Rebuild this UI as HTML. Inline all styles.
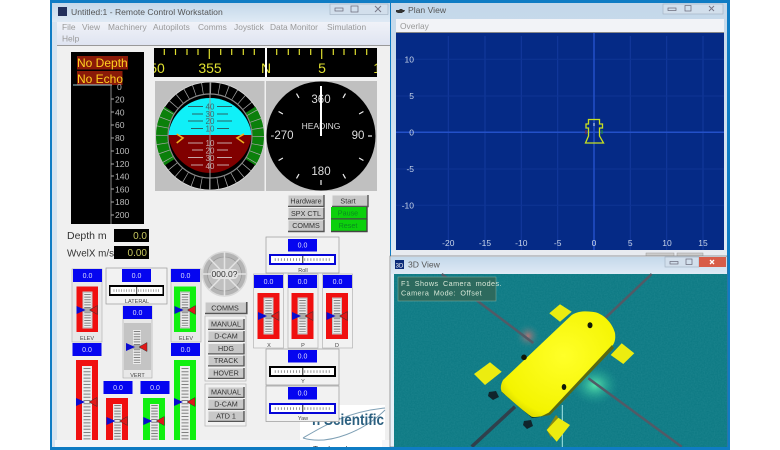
<!DOCTYPE html>
<html><head><meta charset="utf-8"><style>
html,body{margin:0;padding:0;background:#fff;width:780px;height:450px;overflow:hidden}
svg{display:block;filter:blur(.35px)}
svg svg{filter:none}
text{font-family:"Liberation Sans",sans-serif}
</style></head><body>
<svg xmlns="http://www.w3.org/2000/svg" width="780" height="450" viewBox="0 0 780 450">
<defs>
<clipPath id="tapeclip"><rect x="154" y="48" width="223" height="29"/></clipPath>
<linearGradient id="tb" x1="0" y1="0" x2="0" y2="1"><stop offset="0" stop-color="#c4d8ea"/><stop offset="1" stop-color="#dfeaf5"/></linearGradient>
<linearGradient id="mn" x1="0" y1="0" x2="0" y2="1"><stop offset="0" stop-color="#f0f2f8"/><stop offset="1" stop-color="#dfe4f1"/></linearGradient>
<radialGradient id="gg"><stop offset="0" stop-color="#5ff0b0" stop-opacity=".9"/><stop offset="1" stop-color="#1a9a90" stop-opacity="0"/></radialGradient>
<radialGradient id="rg"><stop offset="0" stop-color="#e07070" stop-opacity=".75"/><stop offset="1" stop-color="#1a8a90" stop-opacity="0"/></radialGradient>
<radialGradient id="hull" cx=".55" cy=".42" r=".72"><stop offset="0" stop-color="#ffff28"/><stop offset=".78" stop-color="#f4f400"/><stop offset="1" stop-color="#c4c400"/></radialGradient>
<filter id="noise" x="0" y="0" width="100%" height="100%"><feTurbulence type="fractalNoise" baseFrequency=".7" numOctaves="2" seed="4"/><feColorMatrix values="0 0 0 0 .2  0 0 0 0 .6  0 0 0 0 .65  0 0 0 .55 -.12"/></filter>
<g id="btn"><rect width="36" height="11" fill="#c8c8c8"/><path d="M0 11V0H36" fill="none" stroke="#eee" stroke-width="1"/><path d="M36 0V11.500H0" fill="none" stroke="#555" stroke-width="1.400"/></g>
<g id="btng"><rect width="36" height="11.500" fill="#0cd00c"/><path d="M36 0V12H0" fill="none" stroke="#444" stroke-width="1.400"/></g>
<g id="tri"><path d="M0 -4L9 0L0 4Z" fill="#0a0ad0"/><path d="M21 -4.500V4.500L13 0Z" fill="#e01818" stroke="#333" stroke-width=".5"/></g>
<g id="hs"><rect width="66" height="10" fill="#fff"/><line x1="4" x2="32" y1="5" y2="5" stroke="#777" stroke-width="3" stroke-dasharray=".8 2.400"/><line x1="35" x2="63" y1="5" y2="5" stroke="#777" stroke-width="3" stroke-dasharray=".8 2.400"/><line x1="33.300" x2="33.300" y1="0" y2="10" stroke="#111" stroke-width="1"/></g>
<g id="lad46"><rect x="-5" y="-1.500" width="10" height="37" fill="#c4c4c4"/><rect x="-4" y="0" width="8" height="34" fill="#ececec"/><line x1="0" x2="0" y1="1" y2="33" stroke="#808080" stroke-width="6.500" stroke-dasharray="1 1.600"/><rect x="-4.500" y="15" width="9" height="4" fill="#aaa"/></g>
</defs>

<!-- outer frame -->
<rect x="50" y="0" width="680" height="450" fill="#0f7cc4"/>
<!-- left window -->
<rect x="52" y="3" width="338" height="444" fill="#d6e3f0"/>
<rect x="52" y="3" width="338" height="19" fill="url(#tb)"/>
<rect x="58" y="7" width="9" height="9" fill="#23305c"/>
<text x="71" y="15" fill="#555" style="font-size:8.600px">Untitled:1 - Remote Control Workstation</text>
<rect x="330" y="4" width="58" height="10.500" fill="#d2dfec" stroke="#9fb0c0" stroke-width=".6"/>
<rect x="335" y="8" width="8" height="3" fill="none" stroke="#667" stroke-width=".7"/>
<rect x="351" y="6" width="7" height="6" fill="none" stroke="#667" stroke-width=".7"/>
<path d="M375 6l6 6m0-6l-6 6" stroke="#778" stroke-width="1"/>
<rect x="57" y="22" width="333" height="23" fill="url(#mn)"/>
<g font-size="8.400" fill="#9a9a9a">
<text x="62" y="30">File</text><text x="82" y="30">View</text><text x="108" y="30">Machinery</text><text x="153" y="30">Autopilots</text><text x="198" y="30">Comms</text><text x="234" y="30">Joystick</text><text x="270" y="30">Data Monitor</text><text x="327" y="30">Simulation</text><text x="62" y="41.500">Help</text>
</g>
<rect x="57" y="45" width="333" height="395" fill="#f0f0f0"/>
<rect x="57" y="45" width="333" height="1" fill="#999"/>
<rect x="55" y="440" width="335" height="7" fill="#f4f6f9"/>

<!-- depth -->
<rect x="71" y="52" width="73" height="172" fill="#000"/>
<rect x="77" y="56" width="51" height="13.500" fill="#8a1a08"/>
<rect x="77" y="71" width="45.500" height="14" fill="#8a1a08"/>
<g font-size="12" fill="#ffd020"><text x="77" y="67">No Depth</text><text x="77" y="83">No Echo</text></g>
<line x1="73" y1="85" x2="112" y2="85" stroke="#9fd0d8"/>
<line x1="111" y1="85" x2="111" y2="224" stroke="#888"/>
<path d="M111 99h3M111 112h3M111 125h3M111 138h3M111 151h3M111 164h3M111 176h3M111 189h3M111 202h3M111 215h3" fill="none" stroke="#aaa"/>
<g font-size="8.600" fill="#bbb"><text x="117" y="90">0</text><text x="115" y="102.500">20</text><text x="115" y="115.500">40</text><text x="115" y="128">60</text><text x="115" y="141">80</text><text x="115" y="154">100</text><text x="115" y="167">120</text><text x="115" y="179.500">140</text><text x="115" y="192.500">160</text><text x="115" y="205">180</text><text x="115" y="218">200</text></g>

<!-- tape -->
<rect x="154" y="48" width="223" height="29" fill="#000"/>
<path stroke="#e0e030" stroke-width="1.200" fill="none" d="M164.300 49v6M175.500 49v6M187 49v6M198 49v6M209.300 49v10M220.700 49v6M231.700 49v6M243.300 49v6M254.300 49v6M276.700 49v6M288.300 49v6M299.300 49v6M310.700 49v6M321.700 49v10M333.300 49v6M344 49v6M355.300 49v6M366.700 49v6"/>
<g clip-path="url(#tapeclip)" font-size="14" fill="#e0e030" text-anchor="middle"><text x="157" y="73">50</text><text x="210" y="73">355</text><text x="266" y="73">N</text><text x="322" y="73">5</text><text x="381" y="73">10</text></g>
<rect x="265" y="48" width="2" height="29" fill="#fff"/>

<!-- ADI -->
<rect x="155" y="81" width="109.500" height="110" fill="#c0c0c0"/>
<circle cx="210" cy="136" r="54" fill="#000" stroke="#ddd" stroke-width=".8"/>
<path d="M250.300 109.900A48 48 0 0 1 250.300 162.100M169.700 162.100A48 48 0 0 1 169.700 109.900" fill="none" stroke="#0b800b" stroke-width="12"/>
<circle cx="210" cy="136" r="48" fill="none" stroke="#a8a8a8" stroke-width="12" stroke-dasharray=".7 7.680"/>
<path d="M168.300 135A42 42 0 0 1 251.700 135Z" fill="#10f0f8"/>
<path d="M168.300 135H251.700A42 43 0 0 1 168.300 135Z" fill="#800000"/>
<circle cx="210" cy="136" r="42" fill="none" stroke="#888" stroke-width="1.200"/>
<line x1="210" y1="82" x2="210" y2="190" stroke="#999" stroke-width="1"/>
<path stroke="#333" stroke-width=".8" fill="none" d="M188 106.500h15M217 106.500h15M192 114h11M217 114h11M188 121h15M217 121h15M191 128.500h12M217 128.500h12"/>
<path stroke="#ddd" stroke-width=".8" fill="none" d="M188 143h15M217 143h15M192 150h11M217 150h11M188 157.500h15M217 157.500h15M191 165h12M217 165h12"/>
<g font-size="8" text-anchor="middle"><g fill="#3a6a70"><text x="210" y="109.500">40</text><text x="210" y="117">30</text><text x="210" y="124">20</text><text x="210" y="131.500">10</text></g><g fill="#c8a8a8"><text x="210" y="146">10</text><text x="210" y="153.500">20</text><text x="210" y="161">30</text><text x="210" y="169">40</text></g></g>
<path d="M176.700 134L183 138L176.700 143M244 134L237 138L244 143" fill="none" stroke="#f0b020" stroke-width="1.600"/>

<!-- Heading -->
<rect x="266" y="81" width="111" height="110" fill="#c0c0c0"/>
<circle cx="321" cy="136" r="54.500" fill="#000"/>
<g stroke="#eee" stroke-width="1.200">
<line x1="321" y1="87" x2="321" y2="92" transform="rotate(30 321 136)"/><line x1="321" y1="87" x2="321" y2="92" transform="rotate(60 321 136)"/><line x1="321" y1="87" x2="321" y2="92" transform="rotate(120 321 136)"/><line x1="321" y1="87" x2="321" y2="92" transform="rotate(150 321 136)"/><line x1="321" y1="87" x2="321" y2="92" transform="rotate(180 321 136)"/><line x1="321" y1="87" x2="321" y2="92" transform="rotate(210 321 136)"/><line x1="321" y1="87" x2="321" y2="92" transform="rotate(240 321 136)"/><line x1="321" y1="87" x2="321" y2="92" transform="rotate(300 321 136)"/><line x1="321" y1="87" x2="321" y2="92" transform="rotate(330 321 136)"/><line x1="368" y1="136" x2="372" y2="136"/>
</g>
<g fill="#ddd" text-anchor="middle"><text x="321" y="103" font-size="11.500">360</text><text x="321" y="129" font-size="8.500">HEADING</text><text x="282" y="139" font-size="11.500">-270</text><text x="358" y="139" font-size="11.500">90</text><text x="321" y="175" font-size="11.500">180</text></g>
<rect x="320" y="86" width="2" height="50" fill="#fff"/>

<!-- Buttons top -->
<g font-size="7.200" fill="#333" text-anchor="middle">
<use href="#btn" x="288" y="195"/><text x="306" y="203.500">Hardware</text>
<use href="#btn" x="288" y="207.500"/><text x="306" y="216">SPX CTL</text>
<use href="#btn" x="288" y="220"/><text x="306" y="228">COMMS</text>
<use href="#btn" x="332" y="195"/><text x="348" y="203.500">Start</text>
<use href="#btng" x="331" y="207"/><text x="348" y="215.500" fill="#0a8a20">Pause</text>
<use href="#btng" x="331" y="219.500"/><text x="348" y="228" fill="#0a8a20">Reset</text>
</g>

<!-- depth readouts -->
<g font-size="10.500" fill="#333"><text x="67" y="239">Depth m</text><text x="67" y="256.500" textLength="47" lengthAdjust="spacingAndGlyphs">WvelX m/s</text></g>
<rect x="114" y="229" width="35" height="13" fill="#000"/><rect x="114" y="246" width="35" height="13" fill="#000"/>
<g font-size="10" fill="#c8c860" text-anchor="end"><text x="147" y="239">0.0</text><text x="147" y="256">0.00</text></g>

<!-- left ELEV -->
<rect x="72" y="269" width="30" height="73" fill="#e8e8e8" stroke="#aaa" stroke-width=".6"/>
<rect x="76.500" y="286.500" width="21.500" height="45.500" fill="#f01010"/>
<g transform="translate(87.500 293)"><use href="#lad46"/></g><use href="#tri" x="76.500" y="310"/>
<rect x="171" y="269" width="30" height="73" fill="#e8e8e8" stroke="#aaa" stroke-width=".6"/>
<rect x="174" y="286.500" width="22" height="45.500" fill="#10f010"/>
<g transform="translate(185 293)"><use href="#lad46"/></g><use href="#tri" x="174.500" y="310"/>
<!-- lateral -->
<rect x="106" y="268" width="61" height="36" fill="#f2f2f2" stroke="#999" stroke-width=".7"/>
<rect x="109" y="285" width="55" height="11" fill="#000"/>
<svg x="110.500" y="287" width="52" height="7" viewBox="0 1 66 8" preserveAspectRatio="none"><use href="#hs"/></svg>
<!-- vert -->
<rect x="123" y="306" width="29" height="72" fill="#e8e8e8" stroke="#aaa" stroke-width=".6"/>
<rect x="124" y="323" width="27" height="47" fill="#c4c4c4"/>
<g transform="translate(137 330)"><use href="#lad46"/></g><use href="#tri" x="126" y="347"/>
<!-- big -->
<rect x="72" y="343" width="29" height="97" fill="#f0f0f0"/><rect x="171" y="343" width="29" height="97" fill="#f0f0f0"/>
<rect x="76" y="360" width="22" height="80" fill="#f01010"/><rect x="174" y="360" width="22" height="80" fill="#10f010"/>
<g fill="#ececec"><rect x="82" y="366" width="10" height="74"/><rect x="180" y="366" width="10" height="74"/></g>
<g stroke="#808080" stroke-width="7" stroke-dasharray="1 2.200"><line x1="87" x2="87" y1="368" y2="440"/><line x1="185" x2="185" y1="368" y2="440"/></g>
<use href="#tri" x="76" y="402"/><use href="#tri" x="174" y="402"/>
<!-- small -->
<rect x="103" y="381" width="29" height="59" fill="#f0f0f0"/><rect x="140" y="381" width="29" height="59" fill="#f0f0f0"/>
<rect x="106" y="398" width="22" height="42" fill="#f01010"/><rect x="143" y="398" width="22" height="42" fill="#10f010"/>
<g fill="#e8e8e8"><rect x="113" y="404" width="9" height="36"/><rect x="150" y="404" width="9" height="36"/></g>
<g stroke="#808080" stroke-width="6.500" stroke-dasharray="1 1.800"><line x1="117.500" x2="117.500" y1="405" y2="440"/><line x1="154.500" x2="154.500" y1="405" y2="440"/></g>
<use href="#tri" x="106.500" y="421"/><use href="#tri" x="143.300" y="421"/>

<!-- blue boxes -->
<g fill="#0505f0">
<rect x="73" y="269" width="29" height="13"/><rect x="122" y="269" width="29" height="13"/><rect x="171" y="269" width="29" height="13"/>
<rect x="123" y="306" width="29" height="13"/><rect x="72.500" y="343" width="29" height="13"/><rect x="171" y="343" width="29" height="13"/>
<rect x="103.500" y="381" width="29" height="13"/><rect x="140.500" y="381" width="29" height="13"/>
</g>

<!-- knob -->
<circle cx="224.500" cy="274" r="22" fill="#b4b4b4" stroke="#d8d8d8" stroke-width="1.500"/>
<circle cx="224.500" cy="274" r="17" fill="#c0c0c0" stroke="#999" stroke-width=".8"/>
<path d="M224.500 252v44M203 274h43M209 258l31 32M240 258l-31 32" stroke="#e4e4e4" stroke-width="1.500"/>
<rect x="211" y="269" width="27" height="10" rx="4" fill="#e4e4e4"/>
<text x="224.500" y="277" font-size="8.500" fill="#333" text-anchor="middle">000.0?</text>

<!-- button groups -->
<rect x="205" y="316" width="41" height="65" fill="#f2f2f2" stroke="#bbb" stroke-width=".8"/>
<rect x="205" y="384" width="41" height="42" fill="#f2f2f2" stroke="#bbb" stroke-width=".8"/>
<use href="#btn" transform="translate(205 302) scale(1.160 1)"/>
<g transform="translate(208 319)"><use href="#btn" transform="scale(1 .9)"/></g>
<g transform="translate(208 331)"><use href="#btn" transform="scale(1 .9)"/></g>
<g transform="translate(208 343.500)"><use href="#btn" transform="scale(1 .9)"/></g>
<g transform="translate(208 355.500)"><use href="#btn" transform="scale(1 .9)"/></g>
<g transform="translate(208 368)"><use href="#btn" transform="scale(1 .9)"/></g>
<g transform="translate(208 387)"><use href="#btn" transform="scale(1 .9)"/></g>
<g transform="translate(208 399)"><use href="#btn" transform="scale(1 .9)"/></g>
<g transform="translate(208 411)"><use href="#btn" transform="scale(1 .9)"/></g>
<g font-size="7.200" fill="#333" text-anchor="middle"><text x="225" y="310.500">COMMS</text><text x="226" y="326.500">MANUAL</text><text x="226" y="338.500">D-CAM</text><text x="226" y="351">HDG</text><text x="226" y="363">TRACK</text><text x="226" y="375.500">HOVER</text><text x="226" y="394.500">MANUAL</text><text x="226" y="406.500">D-CAM</text><text x="226" y="418.500">ATD 1</text></g>

<!-- logo -->
<rect x="300" y="405" width="85" height="35" fill="#fff"/>
<rect x="310" y="440" width="72" height="7" fill="#fff"/>
<path d="M303 438C320 428 345 412 385 408M303 438C330 446 365 430 385 410" fill="none" stroke="#7fa0b5" stroke-width="1"/>
<text x="312" y="425" font-size="16" font-weight="bold" fill="#2c6080" textLength="72" lengthAdjust="spacingAndGlyphs">n Scientific</text>
<text x="313" y="452" font-size="8" fill="#444">Top Level</text>
<rect x="390" y="405" width="2" height="45" fill="#d6e3f0"/>

<!-- Roll / XPD / Y / Yaw panels -->
<rect x="266" y="237" width="73" height="36" fill="#f2f2f2" stroke="#999" stroke-width=".7"/>
<rect x="288" y="239" width="29" height="12.500" fill="#0505f0"/>
<rect x="269" y="254" width="67" height="11" fill="#0505d8"/>
<svg x="271" y="256" width="63" height="7" viewBox="0 1 66 8" preserveAspectRatio="none"><use href="#hs"/></svg>
<rect x="266" y="349" width="73" height="36" fill="#f2f2f2" stroke="#999" stroke-width=".7"/>
<rect x="288" y="350" width="29" height="12.500" fill="#0505f0"/>
<rect x="269" y="366" width="67" height="11" fill="#000"/>
<svg x="271" y="368" width="63" height="7" viewBox="0 1 66 8" preserveAspectRatio="none"><use href="#hs"/></svg>
<rect x="266" y="386" width="73" height="35.500" fill="#f2f2f2" stroke="#999" stroke-width=".7"/>
<rect x="288" y="387" width="29" height="12.500" fill="#0505f0"/>
<rect x="269" y="403" width="67" height="11" fill="#0505d8"/>
<svg x="271" y="405" width="63" height="7" viewBox="0 1 66 8" preserveAspectRatio="none"><use href="#hs"/></svg>
<rect x="253.500" y="274" width="30" height="74" fill="#f2f2f2" stroke="#aaa" stroke-width=".6"/><rect x="288" y="274" width="30" height="74" fill="#f2f2f2" stroke="#aaa" stroke-width=".6"/><rect x="322.500" y="274" width="30" height="74" fill="#f2f2f2" stroke="#aaa" stroke-width=".6"/>
<rect x="254" y="275" width="29" height="13" fill="#0505f0"/><rect x="288" y="275" width="29" height="13" fill="#0505f0"/><rect x="323" y="275" width="29" height="13" fill="#0505f0"/>
<rect x="257.500" y="293" width="22" height="46" fill="#f01010"/><rect x="291.500" y="293" width="22" height="46" fill="#f01010"/><rect x="326" y="293" width="22" height="46" fill="#f01010"/>
<g transform="translate(268.500 299)"><use href="#lad46"/></g><g transform="translate(302.500 299)"><use href="#lad46"/></g><g transform="translate(337 299)"><use href="#lad46"/></g>
<use href="#tri" x="258" y="316"/><use href="#tri" x="292" y="316"/><use href="#tri" x="326.500" y="316"/>

<g fill="#fff" text-anchor="middle" style="font-size:7px" opacity=".85">
<text x="87.500" y="278">0.0</text><text x="136.500" y="278">0.0</text><text x="185.500" y="278">0.0</text><text x="137.500" y="315">0.0</text><text x="87" y="352">0.0</text><text x="185.500" y="352">0.0</text><text x="118" y="390">0.0</text><text x="155" y="390">0.0</text>
<text x="302.500" y="247.500">0.0</text><text x="268.500" y="284">0.0</text><text x="302.500" y="284">0.0</text><text x="337.500" y="284">0.0</text><text x="302.500" y="358.500">0.0</text><text x="302.500" y="395.500">0.0</text>
</g>
<g fill="#444" text-anchor="middle" style="font-size:5.500px">
<text x="87" y="340">ELEV</text><text x="186" y="340">ELEV</text><text x="137" y="303">LATERAL</text><text x="137.500" y="377">VERT</text><text x="303" y="272">Roll</text><text x="269" y="347">X</text><text x="303" y="347">P</text><text x="337" y="347">D</text><text x="303" y="383">Y</text><text x="303" y="420">Yaw</text>
</g>

<!-- Plan view window -->
<rect x="391" y="3" width="336" height="254" fill="url(#tb)"/>
<rect x="396" y="19" width="328" height="14" fill="#f2f3f7"/>
<rect x="396" y="32" width="328" height="1" fill="#888"/>
<text x="400" y="29" font-size="8.400" fill="#999">Overlay</text>
<path d="M396 10h3l1-1h2l1 1h2l-1 2h-1l-1 1h-4l-2-1z" fill="#333"/>
<text x="408" y="13" font-size="8.600" fill="#555">Plan View</text>
<rect x="663" y="4" width="60" height="10" fill="#d2dfec" stroke="#9fb0c0" stroke-width=".6"/>
<rect x="668" y="8" width="8" height="2.500" fill="none" stroke="#667" stroke-width=".7"/>
<rect x="685" y="5.500" width="6" height="5.500" fill="none" stroke="#667" stroke-width=".7"/>
<path d="M709 6l5 5m0-5l-5 5" stroke="#778" stroke-width="1"/>
<rect x="396" y="33" width="328" height="217" fill="#052a86"/>
<path stroke="#143a9e" stroke-width="1" fill="none" d="M448.300 36V250M485 36V250M521.300 36V250M557.700 36V250M630.300 36V250M666.700 36V250M703 36V250"/>
<path stroke="#0e3494" stroke-width="1" fill="none" d="M396 59.300H724M396 96H724M396 169H724M396 205.300H724"/>
<path stroke="#2350c8" stroke-width="1.500" fill="none" d="M594 33V250M396 132.300H724"/>
<g font-size="8.500" fill="#c8d4e8" text-anchor="middle"><text x="448.300" y="246">-20</text><text x="485" y="246">-15</text><text x="521.300" y="246">-10</text><text x="557.700" y="246">-5</text><text x="594" y="246">0</text><text x="630.300" y="246">5</text><text x="667" y="246">10</text><text x="703" y="246">15</text></g>
<g font-size="8.500" fill="#c8d4e8" text-anchor="end"><text x="414" y="62.500">10</text><text x="414" y="99">5</text><text x="414" y="135.500">0</text><text x="414" y="172">-5</text><text x="414" y="208.500">-10</text></g>
<path d="M588.500 119.500H599.500V124H602.500V128H599.500V136L603.500 143H585.500L588.500 136V128H586V124H588.500Z" fill="none" stroke="#c8e020" stroke-width="1.300"/>
<path d="M586 130v4" stroke="#a02020"/><path d="M602 130v4" stroke="#20a020"/>
<path d="M594 123v3" stroke="#fff" stroke-width=".8"/>
<rect x="391" y="250" width="336" height="7" fill="#e8ebf0"/>
<rect x="646" y="253" width="28" height="4" fill="#ccc" stroke="#999" stroke-width=".5"/><rect x="677" y="253" width="26" height="4" fill="#ccc" stroke="#999" stroke-width=".5"/>

<!-- 3D window -->
<rect x="390" y="256" width="337" height="191" fill="#e8f0f8" stroke="#666" stroke-width=".6"/>
<rect x="391" y="257" width="336" height="17" fill="url(#tb)"/>
<rect x="395" y="260" width="9" height="9" fill="#0a2a78"/>
<text x="399.500" y="267.500" font-size="6" fill="#fff" text-anchor="middle">3D</text>
<text x="408" y="267.500" font-size="8.600" fill="#555">3D View</text>
<rect x="665" y="257" width="34" height="10" fill="#d2dfec" stroke="#9fb0c0" stroke-width=".6"/>
<rect x="670" y="261.500" width="8" height="2.500" fill="none" stroke="#667" stroke-width=".7"/>
<rect x="686" y="259" width="6" height="5.500" fill="none" stroke="#667" stroke-width=".7"/>
<rect x="699" y="257" width="27" height="10" fill="#d85c48"/>
<path d="M710 260l4 4m0-4l-4 4" stroke="#fff" stroke-width="1.300"/>
<rect x="394" y="274" width="333" height="173" fill="#0e7a84"/>
<rect x="394" y="274" width="333" height="173" filter="url(#noise)" opacity=".3"/>
<circle cx="528" cy="336" r="13" fill="url(#rg)"/>
<ellipse cx="595" cy="385" rx="24" ry="20" fill="url(#gg)"/>
<path stroke="#525a66" stroke-width="2.500" fill="none" d="M441.700 274L533.300 343M651.700 274L605 318.300M588.300 378.300L681.700 446.700"/>
<path d="M515 406.700L471.700 446.700" stroke-width="3.500" stroke="#30404c" fill="none"/>
<line x1="562.300" y1="405" x2="562.300" y2="447" stroke="#a8e8e8" stroke-width="1"/>
<path d="M560 304.300L571.700 311.700L560 321.700L549.300 313.300Z" fill="#ecec10"/>
<path d="M621.700 343.300L634.300 353.300L623.300 364L610.700 355Z" fill="#ecec10"/>
<path d="M490 362.300L501.700 371.700L485 385L474 374Z" fill="#ecec10"/>
<path d="M556 415L546.700 430L551 438L558 417Z" fill="#8a8a10"/>
<path d="M558.300 417.700L570 425L556.700 441.700L546.700 430Z" fill="#ecec10"/>
<path d="M489 392l7-1 3 6-6 3-5-4zM524 421l7-1 2 6-6 3-4-4z" fill="#10242c"/>
<path d="M501.700 392L532 418L540 417L504 388Z" fill="#0a3a20"/>
<path d="M591.700 311.700C603 312 613 324 615 333C616 340 614 344 611.700 346.700L548.300 413.300C542 417 536 417.500 531.700 416.700C522 410 510 399 501.700 391.700C500 388 501 384 503 380L571.700 315C578 311 585 311 591.700 311.700Z" fill="url(#hull)"/>
<path d="M614 348L550 415L540 417L549 412.500L612 345Z" fill="#5a6a10"/>
<g fill="#101808"><ellipse cx="590" cy="325.300" rx="2.500" ry="3"/><ellipse cx="524" cy="357.300" rx="2.800" ry="2.800"/><ellipse cx="564" cy="387" rx="2.300" ry="3"/></g>
<rect x="398" y="277" width="98" height="24" fill="#2d6a5e" stroke="#8ab0a0" stroke-width=".5"/>
<g fill="#d8e8d8" style="font-size:7.200px"><text x="401" y="286" style="word-spacing:2px;letter-spacing:.45px">F1 Shows Camera modes.</text><text x="401" y="295.500" style="word-spacing:2px;letter-spacing:.45px">Camera Mode: Offset</text></g>
<rect x="50" y="447" width="680" height="3" fill="#0f7cc4"/>
</svg>
</body></html>
